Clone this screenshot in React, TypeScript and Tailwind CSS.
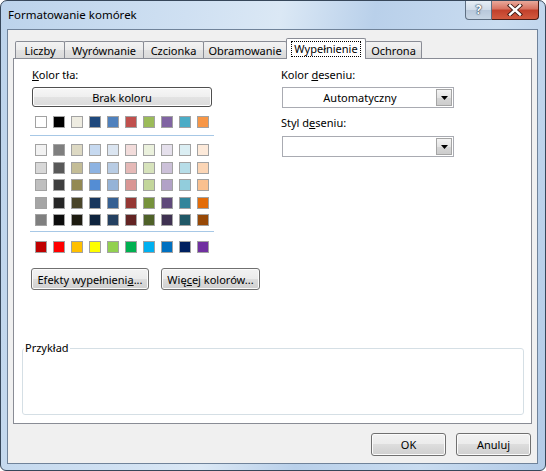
import React from "react";

const theme = ["#FFFFFF", "#000000", "#EEECE1", "#1F497D", "#4F81BD", "#C0504D", "#9BBB59", "#8064A2", "#4BACC6", "#F79646"];
const tints = [
  ["#F2F2F2", "#7F7F7F", "#DDD9C3", "#C6D9F0", "#DBE5F1", "#F2DCDB", "#EBF1DD", "#E5E0EC", "#DBEEF3", "#FDEADA"],
  ["#D8D8D8", "#595959", "#C4BD97", "#8DB3E2", "#B8CCE4", "#E5B9B7", "#D7E3BC", "#CCC1D9", "#B7DDE8", "#FBD5B5"],
  ["#BFBFBF", "#3F3F3F", "#938953", "#548DD4", "#95B3D7", "#D99694", "#C3D69B", "#B2A2C7", "#92CDDC", "#FAC08F"],
  ["#A5A5A5", "#262626", "#494429", "#17365D", "#366092", "#953734", "#76923C", "#5F497A", "#31859B", "#E36C09"],
  ["#7F7F7F", "#0C0C0C", "#1D1B10", "#0F243E", "#244061", "#632423", "#4F6128", "#3F3151", "#205867", "#974806"],
];
const standard = ["#C00000", "#FF0000", "#FFC000", "#FFFF00", "#92D050", "#00B050", "#00B0F0", "#0070C0", "#002060", "#7030A0"];

const tabs = [
  { label: "Liczby", w: "w-[50px]" },
  { label: "Wyrównanie", w: "w-[80px]" },
  { label: "Czcionka", w: "w-[61px]" },
  { label: "Obramowanie", w: "w-[84px]" },
  { label: "Wypełnienie", w: "w-[80px]", active: true },
  { label: "Ochrona", w: "w-[57px]" },
];

const btn =
  "shrink-0 whitespace-nowrap flex items-center justify-center rounded-[3px] border border-[#707070] bg-[linear-gradient(to_bottom,#f2f2f2_0%,#ebebeb_50%,#dddddd_50%,#cfcfcf_100%)] shadow-[inset_0_0_0_1px_#fbfbfb]";

const Swatch = ({ c }: { c: string }) => (
  <div className="w-[12px] h-[12px] border border-[#a2a2a2]" style={{ backgroundColor: c }} />
);

const Row = ({ colors }: { colors: string[] }) => (
  <div className="flex gap-[6px]">
    {colors.map((c, i) => (
      <Swatch key={i} c={c} />
    ))}
  </div>
);

const Arrow = () => (
  <svg width="7" height="4" viewBox="0 0 7 4">
    <path d="M0 0h7L3.5 4z" fill="#000" />
  </svg>
);

const Combo = ({ value }: { value?: string }) => (
  <div className="w-[172px] h-[21px] border border-[#a9abb2] bg-white flex p-[1px]">
    <div className="flex-1 flex items-center justify-center">{value}</div>
    <div className="w-[16px] border border-[#a5a5a5] bg-[linear-gradient(to_bottom,#f4f4f4,#e4e4e4_50%,#d6d6d6_50%,#cdcdcd)] flex items-center justify-center">
      <Arrow />
    </div>
  </div>
);

export default function App() {
  return (
    <div className="w-[546px] h-[471px] flex flex-col rounded-t-[7px] rounded-b-[6px] border border-[#37475a] bg-[linear-gradient(100deg,#bcd3eb_0%,#cfe0f2_30%,#dbe8f5_45%,#b9d0ea_60%,#c9dcf0_80%,#b3cbe7_100%)] font-['Noto_Sans',sans-serif] text-[11px] text-black leading-[15px] overflow-hidden">
      {/* title bar */}
      <div className="h-[28px] flex items-start shrink-0">
        <div className="pl-[7px] pt-[6px] text-[11.5px]">Formatowanie komórek</div>
        <div className="ml-auto mr-[6px] flex">
          <div className="w-[27px] h-[19px] rounded-bl-[4px] border border-t-0 border-[#5e6f82] bg-[linear-gradient(to_bottom,#e6eef6,#cfdbe8_50%,#b8c8da_50%,#c8d6e5)] flex items-center justify-center">
            <span className="text-white font-bold text-[12px] leading-none [text-shadow:0_0_1px_#34465a,0_0_1px_#34465a,0_0_2px_#34465a]">?</span>
          </div>
          <div className="w-[47px] h-[19px] rounded-br-[4px] border border-t-0 border-l-0 border-[#4a1c15] bg-[linear-gradient(to_bottom,#e9a99b,#d7715f_45%,#c1402b_50%,#d25a3f_100%)] flex items-center justify-center">
            <svg width="16" height="12" viewBox="0 0 16 12">
              <path d="M3 1.5l10 9M13 1.5l-10 9" stroke="#3b1a14" strokeWidth="4.2" strokeLinecap="square" />
              <path d="M3 1.5l10 9M13 1.5l-10 9" stroke="#fff" strokeWidth="2.4" strokeLinecap="square" />
            </svg>
          </div>
        </div>
      </div>

      {/* client */}
      <div className="flex-1 ml-[6px] mr-[7px] mb-[6px] border border-[#70839a] bg-[#f0f0f0] flex flex-col px-[5px] pt-[8px]">
        {/* tabs */}
        <div className="flex items-end h-[20px] pl-[2px] shrink-0">
          {tabs.map((t, i) =>
            t.active ? (
              <div
                key={t.label}
                className={`${t.w} h-[21px] -mb-px -ml-px relative z-10 bg-white border border-b-0 border-[#898c95] rounded-t-[2px] flex items-start justify-center pt-[2px]`}>
                <span className="border border-dotted border-black px-[2px] leading-[14px]">{t.label}</span>
              </div>
            ) : (
              <div
                key={t.label}
                className={`${t.w} h-[17px] ${i > 0 ? "-ml-px" : ""} border border-b-0 border-[#898c95] rounded-t-[2px] bg-[linear-gradient(to_bottom,#f3f3f3,#ebebeb_50%,#e2e2e2_50%,#dadada)] flex items-center justify-center`}>
                {t.label}
              </div>
            )
          )}
        </div>

        {/* panel */}
        <div className="h-[366px] border border-[#898c95] bg-white flex flex-col shrink-0">
          <div className="flex pl-[16px] pt-[8px]">
            {/* left column */}
            <div className="w-[184px] shrink-0 flex flex-col">
              <div className="ml-[2px] h-[16px] leading-[16px]">
                <span className="underline">K</span>olor tła:
              </div>
              <div className="ml-[2px] mt-[4px] w-[180px] h-[20px] rounded-[3px] border border-[#4f4f4f] bg-[linear-gradient(to_bottom,#f7f7f7,#efefef_50%,#e3e3e3_50%,#dcdcdc)] shadow-[inset_0_0_0_1px_#ffffff] flex items-center justify-center">
                Brak koloru
              </div>
              <div className="pl-[5px] mt-[9px]">
                <Row colors={theme} />
              </div>
              <div className="mt-[7px] h-px bg-[#a7c8e6]" />
              <div className="pl-[5px] mt-[8px] flex flex-col gap-[5.5px]">
                {tints.map((r, i) => (
                  <Row key={i} colors={r} />
                ))}
              </div>
              <div className="mt-[5px] h-px bg-[#a7c8e6]" />
              <div className="pl-[5px] mt-[9px]">
                <Row colors={standard} />
              </div>
              <div className="flex mt-[15px] ml-[1px] gap-[12px]">
                <div className={`${btn} w-[118px] h-[22px]`}>
                  Efekty wypełnieni<span className="underline">a</span>...
                </div>
                <div className={`${btn} w-[99px] h-[22px]`}>
                  Wię<span className="underline">c</span>ej kolorów...
                </div>
              </div>
            </div>

            {/* right column */}
            <div className="ml-[67px] flex flex-col">
              <div className="h-[16px] leading-[16px]">
                Kolor <span className="underline">d</span>eseniu:
              </div>
              <div className="mt-[4px] ml-px">
                <Combo value="Automatyczny" />
              </div>
              <div className="mt-[7px] h-[16px] leading-[16px]">
                Styl d<span className="underline">e</span>seniu:
              </div>
              <div className="mt-[5px] ml-px">
                <Combo />
              </div>
            </div>
          </div>

          <fieldset className="mt-auto mb-[8px] ml-[8px] mr-[7px] h-[74px] border border-[#d5dfe5] rounded-[3px]">
            <legend className="ml-px px-px leading-[14px]">Przykład</legend>
          </fieldset>
        </div>

        {/* buttons */}
        <div className="flex justify-end gap-[10px] mt-[9px] pr-px">
          <div className={`${btn} w-[75px] h-[23px] border-[#3c7fb1] shadow-[inset_0_0_0_1px_#c8ecfc,0_0_2px_#8cc8ee]`}>OK</div>
          <div className={`${btn} w-[75px] h-[23px]`}>Anuluj</div>
        </div>
      </div>
    </div>
  );
}
